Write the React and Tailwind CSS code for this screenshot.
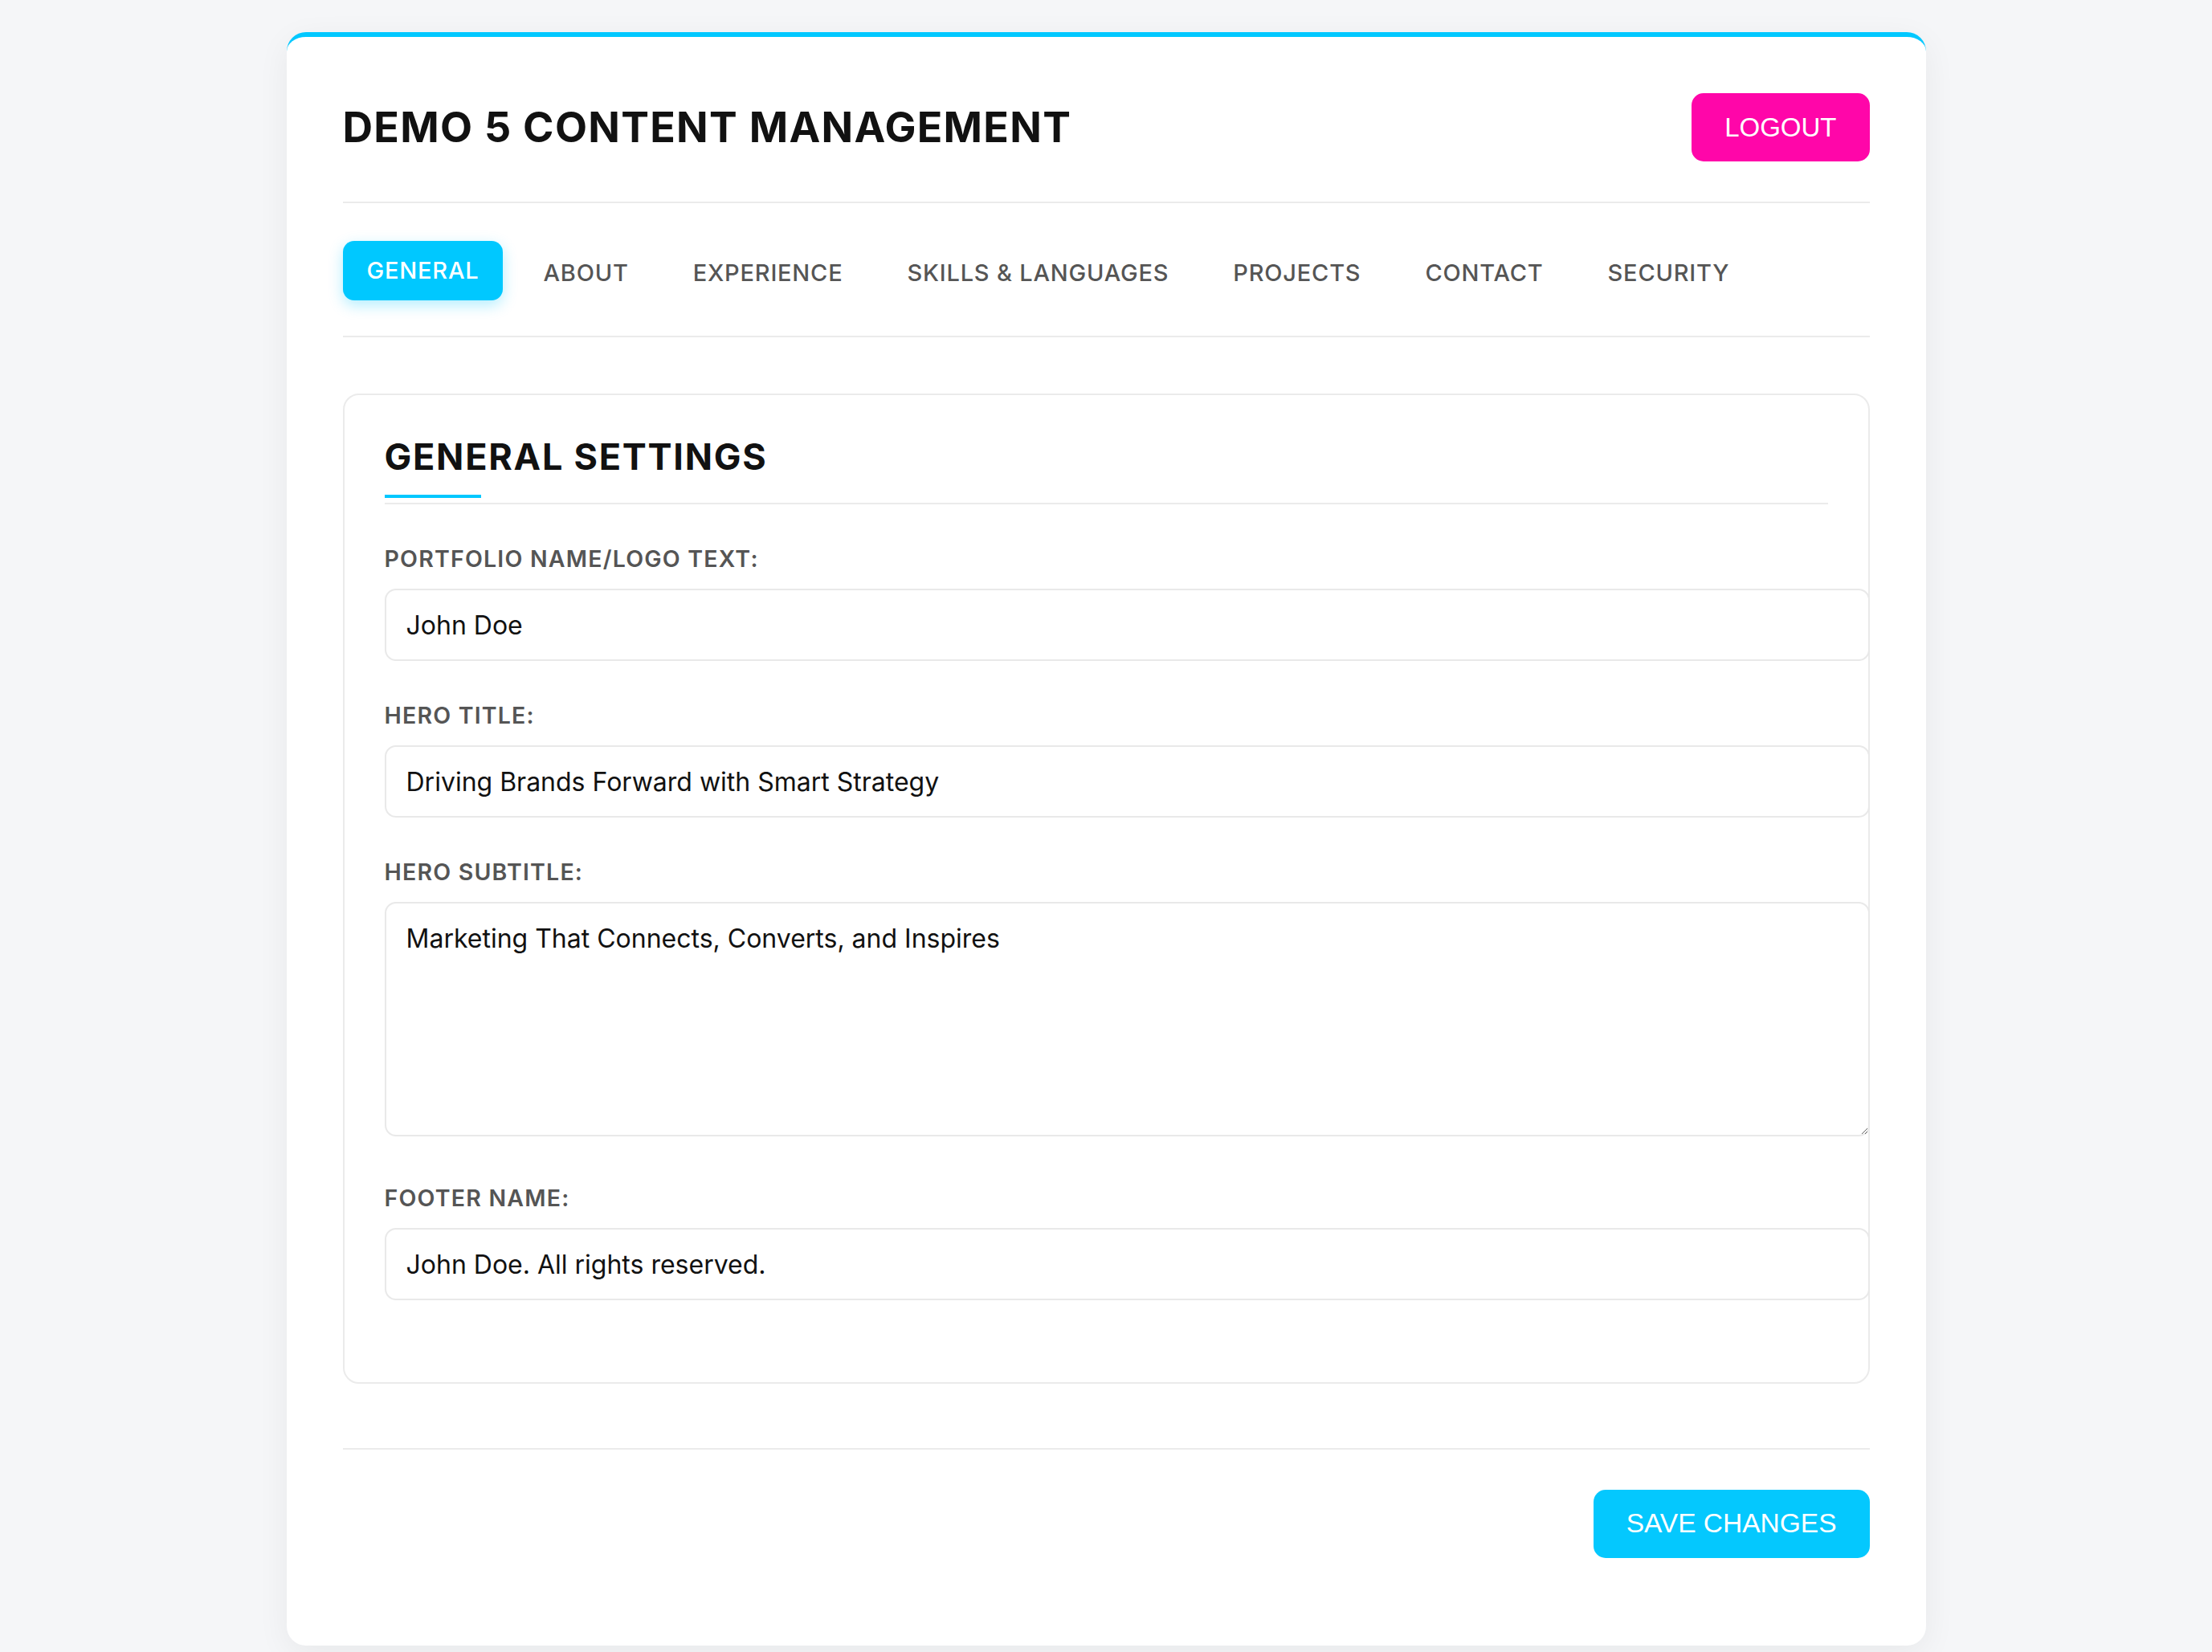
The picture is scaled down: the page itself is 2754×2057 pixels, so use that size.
import { useState } from "react";

const tabs = [
  "General",
  "About",
  "Experience",
  "Skills & Languages",
  "Projects",
  "Contact",
  "Security",
];

function Field({ label, children, className = "mb-[50px]" }) {
  return (
    <div className={className}>
      <label className="block mb-[20px] text-[28.5px] leading-[35px] font-semibold uppercase tracking-[1.2px] text-[#555]">
        {label}
      </label>
      {children}
    </div>
  );
}

export default function App() {
  const [activeTab, setActiveTab] = useState("General");
  const [form, setForm] = useState({
    logo: "John Doe",
    heroTitle: "Driving Brands Forward with Smart Strategy",
    heroSubtitle: "Marketing That Connects, Converts, and Inspires",
    footer: "John Doe. All rights reserved.",
  });

  const handleChange = (e) =>
    setForm((prev) => ({ ...prev, [e.target.name]: e.target.value }));

  const inputClass =
    "block w-[calc(100%+52px)] h-[90px] px-[25px] border-2 border-[#e9e9e9] rounded-[14px] text-[32px] text-[#111] bg-white outline-none";

  return (
    <div className="min-h-screen bg-[#f5f6f8] pt-[40px] pb-[40px] font-['Inter',sans-serif]">
      <div className="mx-auto w-[2041px] bg-white rounded-[24px] border-t-[6px] border-[#00c8ff] shadow-[0_10px_40px_rgba(0,0,0,0.06)] px-[70px] pt-[70px] pb-[109px]">
        {/* header */}
        <header className="flex items-center justify-between pb-[50px] border-b-2 border-[#ebebeb]">
          <h1 className="text-[52px] leading-[64px] font-bold uppercase tracking-[1.3px] text-[#111]">
            Demo 5 Content Management
          </h1>
          <button className="h-[85px] px-[41px] rounded-[15px] bg-[#ff06a9] text-white text-[33px] uppercase font-['Liberation_Sans',Arial,sans-serif]">
            Logout
          </button>
        </header>

        {/* tabs */}
        <nav className="mt-[50px] pb-[41px] border-b-2 border-[#ebebeb] flex gap-[20px]">
          {tabs.map((tab) => (
            <button
              key={tab}
              onClick={() => setActiveTab(tab)}
              className={
                activeTab === tab
                  ? "h-[74px] px-[30px] rounded-[14px] bg-[#00c8ff] text-white text-[29px] font-medium uppercase tracking-[0.8px] -translate-y-[3px] shadow-[0_6px_18px_rgba(0,200,255,0.3)]"
                  : "h-[74px] px-[30px] rounded-[14px] text-[#555] text-[29px] font-medium uppercase tracking-[0.8px]"
              }
            >
              {tab}
            </button>
          ))}
        </nav>

        {/* general settings */}
        <section className="mt-[70px] border-2 border-[#ebebeb] rounded-[20px] px-[50px] pt-[50px] pb-[52px]">
          <div className="relative pb-[30px] border-b-2 border-[#ebebeb] mb-[50px]">
            <h2 className="text-[45px] leading-[54px] font-bold uppercase tracking-[1.75px] text-[#111]">
              General Settings
            </h2>
            <span className="absolute left-0 bottom-[6px] w-[120px] h-[4px] bg-[#00c8ff]" />
          </div>

          <Field label="Portfolio Name/Logo Text:">
            <input
              name="logo"
              value={form.logo}
              onChange={handleChange}
              className={inputClass}
            />
          </Field>

          <Field label="Hero Title:">
            <input
              name="heroTitle"
              value={form.heroTitle}
              onChange={handleChange}
              className={inputClass}
            />
          </Field>

          <Field label="Hero Subtitle:" className="mb-[59px]">
            <textarea
              name="heroSubtitle"
              value={form.heroSubtitle}
              onChange={handleChange}
              className="block w-[calc(100%+52px)] h-[292px] px-[25px] py-[25px] border-2 border-[#e9e9e9] rounded-[14px] text-[32px] leading-[38px] text-[#111] bg-white outline-none"
            />
          </Field>

          <Field label="Footer Name:">
            <input
              name="footer"
              value={form.footer}
              onChange={handleChange}
              className={inputClass}
            />
          </Field>
        </section>

        {/* actions */}
        <div className="mt-[80px] pt-[50px] border-t-2 border-[#ebebeb] flex justify-end">
          <button className="h-[85px] px-[41px] rounded-[15px] bg-[#04c8fe] text-white text-[33.5px] uppercase font-['Liberation_Sans',Arial,sans-serif]">
            Save Changes
          </button>
        </div>
      </div>
    </div>
  );
}
